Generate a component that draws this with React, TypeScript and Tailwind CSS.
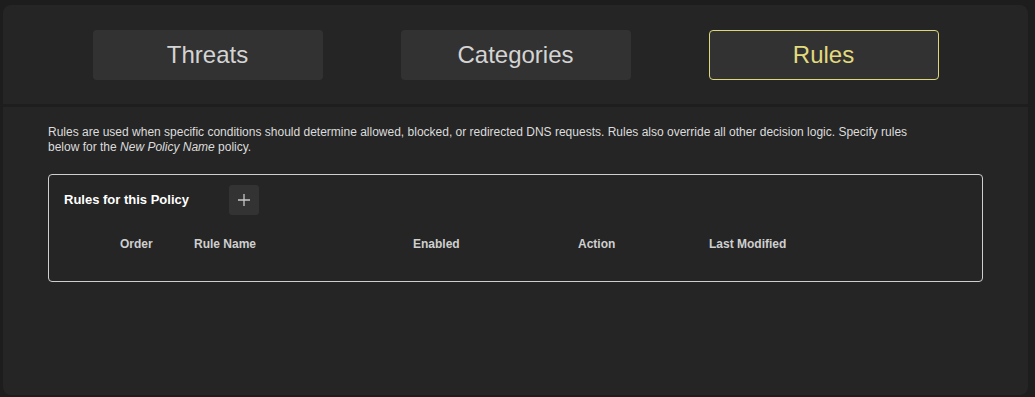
const tabs = ['Threats', 'Categories', 'Rules'];
const active = 'Rules';

const columns = [
  { label: 'Order', width: 'w-[74px]' },
  { label: 'Rule Name', width: 'w-[219px]' },
  { label: 'Enabled', width: 'w-[165px]' },
  { label: 'Action', width: 'w-[131px]' },
  { label: 'Last Modified', width: 'w-[160px]' },
];

export default function App() {
  return (
    <div className="h-[397px] w-[1035px] bg-[#1d1d1d] pt-[5px] pr-[7px] pb-[2px] pl-[3px] font-['Liberation_Sans',Arial,sans-serif]">
      <div className="flex h-full flex-col overflow-hidden rounded-[8px] bg-[#252525]">
        {/* Tabs */}
        <div className="flex h-[99px] shrink-0 items-center justify-center gap-[78px] pt-[1px]">
          {tabs.map((tab) => (
            <button
              key={tab}
              className={
                tab === active
                  ? 'flex h-[50px] w-[230px] items-center justify-center rounded-[4px] border border-[#ddd67a] bg-[#323232] text-[24px] text-[#e2da7e]'
                  : 'flex h-[50px] w-[230px] items-center justify-center rounded-[4px] bg-[#323232] text-[24px] text-[#d4d4d4]'
              }
            >
              {tab}
            </button>
          ))}
        </div>
        <div className="h-[3px] shrink-0 bg-[#1e1e1e]" />

        {/* Body */}
        <div className="px-[45px] pt-[18px]">
          <p className="w-[880px] text-[12px] leading-[15px] text-[#dcdcdc]">
            Rules are used when specific conditions should determine allowed, blocked, or redirected DNS requests. Rules also override all other decision logic. Specify rules below for the <i>New Policy Name</i> policy.
          </p>

          <div className="mt-[19px] h-[108px] w-[935px] rounded-[4px] border border-[#cfcfcf]">
            <div className="flex items-center gap-[40px] pt-[10px] pl-[15px]">
              <span className="text-[13px] font-bold text-white">Rules for this Policy</span>
              <button className="flex h-[30px] w-[30px] items-center justify-center rounded-[3px] bg-[#333333] text-[#c8c8c8]">
                <svg width="14" height="14" viewBox="0 0 14 14" fill="none" stroke="currentColor" strokeWidth="1.3">
                  <path d="M7 1v12M1 7h12" />
                </svg>
              </button>
            </div>
            <div className="mt-[20px] flex pl-[71px] text-[12px] font-bold text-[#cfcfcf]">
              {columns.map((col) => (
                <div key={col.label} className={col.width}>
                  {col.label}
                </div>
              ))}
            </div>
          </div>
        </div>
      </div>
    </div>
  );
}
